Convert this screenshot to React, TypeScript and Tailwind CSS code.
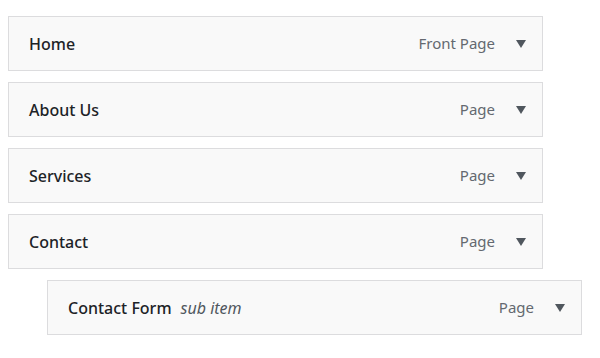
import React from "react";

type Item = { title: string; type: string; sub?: boolean };

const items: Item[] = [
  { title: "Home", type: "Front Page" },
  { title: "About Us", type: "Page" },
  { title: "Services", type: "Page" },
  { title: "Contact", type: "Page" },
  { title: "Contact Form", type: "Page", sub: true },
];

function Row({ item }: { item: Item }) {
  return (
    <div
      className={`flex items-center h-[55px] w-[535px] border border-[#dcdcde] bg-[#f9f9f9] pl-[20px] pr-[16px] ${
        item.sub ? "ml-[47px]" : "ml-[8px]"
      }`}
    >
      <span className="text-[16px] font-medium text-[#1d2327]">{item.title}</span>
      {item.sub && (
        <span className="ml-[9px] text-[16px] italic text-[#50575e]">sub item</span>
      )}
      <span className="ml-auto text-[15px] text-[#646970]">{item.type}</span>
      <svg width="10" height="8" viewBox="0 0 10 8" className="ml-[21px]">
        <path d="M0 0 L10 0 L5 8 Z" fill="#50575e" />
      </svg>
    </div>
  );
}

export default function App() {
  return (
    <div
      className="w-[600px] h-[358px] bg-white pt-[16px] flex flex-col gap-[11px]"
      style={{ fontFamily: '"Noto Sans", "Open Sans", sans-serif' }}
    >
      {items.map((it) => (
        <Row key={it.title} item={it} />
      ))}
    </div>
  );
}
